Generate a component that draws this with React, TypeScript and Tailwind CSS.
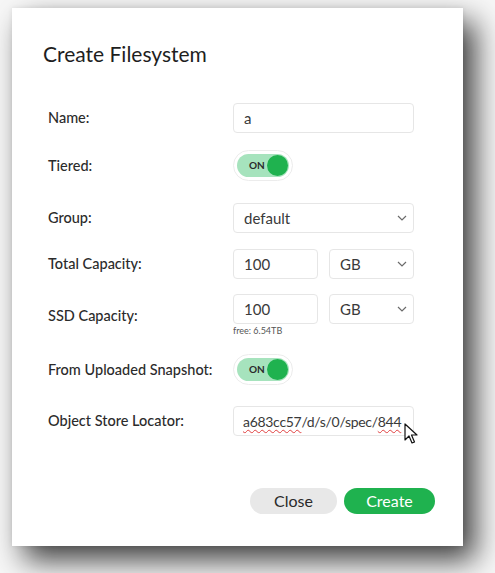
import type { ReactNode } from "react";

const font = { fontFamily: "Lato, 'Noto Sans', sans-serif" };

function Chevron() {
  return (
    <svg width="10" height="6" viewBox="0 0 10 6" className="shrink-0">
      <polyline points="1,1 5,5 9,1" fill="none" stroke="#6b6b6b" strokeWidth="1.2" />
    </svg>
  );
}

function Toggle() {
  return (
    <span className="flex h-[31px] w-[60px] items-center rounded-full border border-[#ececec] bg-white p-[3px]">
      <span className="flex h-[23px] w-full items-center justify-between rounded-full bg-[#a6e3bd] pl-[12px] pr-[1px]">
        <span className="text-[10px] font-bold text-[#2a2a2a]">ON</span>
        <span className="h-[21px] w-[21px] rounded-full bg-[#1fb24f]" />
      </span>
    </span>
  );
}

function Box({ children, className = "" }: { children: ReactNode; className?: string }) {
  return (
    <div
      className={`flex h-[30px] items-center rounded-[4px] border border-[#e6e6e6] bg-white px-[10px] text-[15px] text-[#3a3a3a] ${className}`}
    >
      {children}
    </div>
  );
}

function Row({ label, children, className = "" }: { label: string; children: ReactNode; className?: string }) {
  return (
    <div className={`flex items-center ${className}`}>
      <div className="w-[185px] shrink-0 text-[14.5px] font-medium text-[#2b2b2b]">{label}</div>
      {children}
    </div>
  );
}

export default function App() {
  return (
    <div className="h-[573px] w-[495px] overflow-hidden bg-[#f7f7f7] pl-[12px] pt-[8px]" style={font}>
      <div className="relative h-[538px] w-[451px] bg-white pl-[31px] pt-[32px] shadow-[0_0_5px_rgba(0,0,0,0.08),12px_14px_28px_rgba(0,0,0,0.75)]">
        <h1 className="text-[21px] leading-[28px] text-[#1e1e1e]">Create Filesystem</h1>

        <div className="pl-[5px]">
          <Row label="Name:" className="mt-[35px]">
            <Box className="w-[181px]">a</Box>
          </Row>

          <Row label="Tiered:" className="mt-[17px]">
            <Toggle />
          </Row>

          <Row label="Group:" className="mt-[22px]">
            <Box className="w-[181px] justify-between pr-[6px]">
              <span>default</span>
              <Chevron />
            </Box>
          </Row>

          <Row label="Total Capacity:" className="mt-[16px]">
            <div className="flex gap-[11px]">
              <Box className="w-[85px]">100</Box>
              <Box className="w-[85px] justify-between pr-[6px]">
                <span>GB</span>
                <Chevron />
              </Box>
            </div>
          </Row>

          <Row label="SSD Capacity:" className="mt-[15px]">
            <div className="flex gap-[11px]">
              <div className="flex flex-col">
                <Box className="w-[85px]">100</Box>
                <span className="mt-[1px] text-[9px] leading-[12px] text-[#555]">free: 6.54TB</span>
              </div>
              <Box className="w-[85px] justify-between pr-[6px]">
                <span>GB</span>
                <Chevron />
              </Box>
            </div>
          </Row>

          <Row label="From Uploaded Snapshot:" className="mt-[17px]">
            <Toggle />
          </Row>

          <Row label="Object Store Locator:" className="mt-[21px]">
            <Box className="relative w-[181px] pl-[9px] pr-[2px]">
              <span className="whitespace-nowrap text-[14px] tracking-[-0.3px]">
                <span className="underline decoration-[#e04040] decoration-wavy decoration-1 underline-offset-2">
                  a683cc57
                </span>
                /d/s/0/spec/
                <span className="underline decoration-[#e04040] decoration-wavy decoration-1 underline-offset-2">
                  844
                </span>
              </span>
              <svg
                className="absolute left-[170px] top-[16px]"
                width="14"
                height="22"
                viewBox="0 0 14 22"
              >
                <path
                  d="M1 1 L1 17 L5 13 L8 20 L10.5 19 L7.5 12 L13 12 Z"
                  fill="#fff"
                  stroke="#111"
                  strokeWidth="1.2"
                  strokeLinejoin="round"
                />
              </svg>
            </Box>
          </Row>
        </div>

        <div className="mt-[52px] flex justify-end gap-[7px] pr-[28px]">
          <button className="h-[26px] w-[87px] rounded-full bg-[#e8e8e8] text-[16px] text-[#2a2a2a]">Close</button>
          <button className="h-[26px] w-[91px] rounded-full bg-[#1fb24f] text-[16px] text-white">Create</button>
        </div>
      </div>
    </div>
  );
}
